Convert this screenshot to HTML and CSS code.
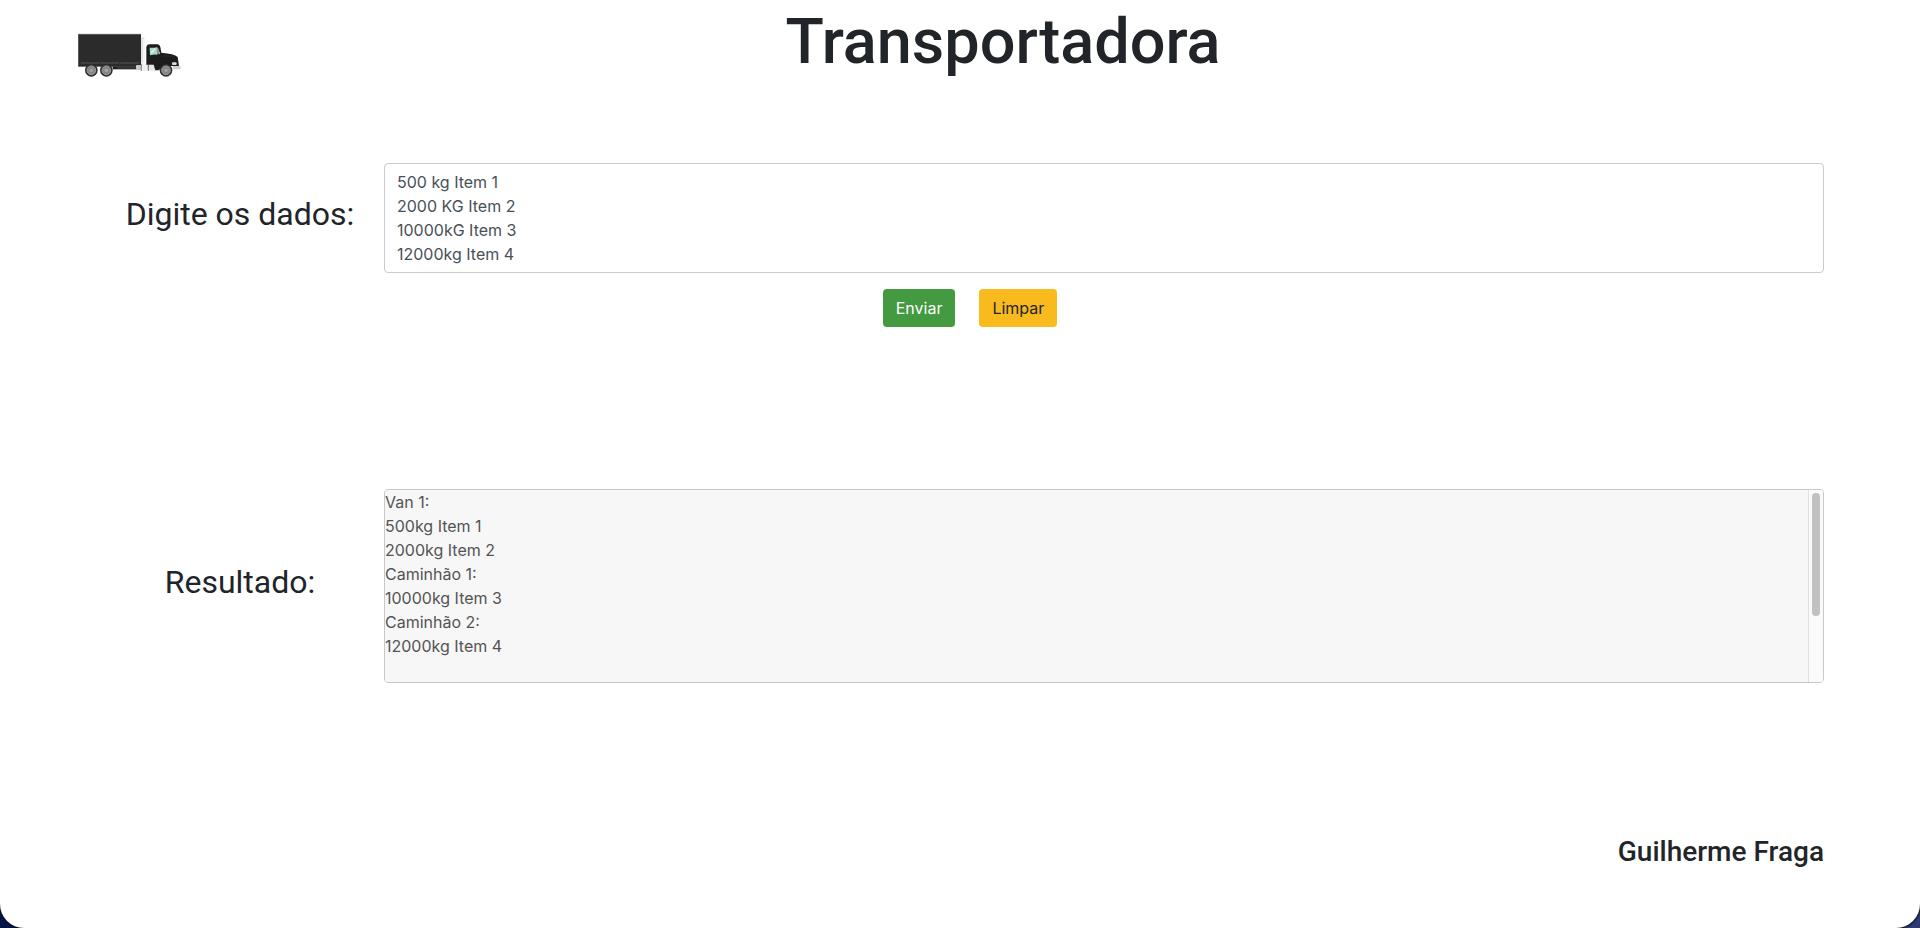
FILE: index.html
```html
<!DOCTYPE html>
<html lang="pt-BR">
<head>
  <meta charset="utf-8">
  <meta name="viewport" content="width=device-width, initial-scale=1">
  <title>Transportadora</title>
  <link rel="stylesheet" href="styles.css">
</head>
<body>
  <div class="window">
    <header class="header">
      <svg class="logo" viewBox="54 38 312 132" role="img" aria-label="Caminhão">
        <rect x="243" y="51" width="10" height="76" rx="4" fill="#e4e1de"/>
        <rect x="248" y="56" width="5" height="70" fill="#f4f1ef"/>
        <rect x="55" y="42" width="188" height="97" fill="#2b2b2b"/>
        <path d="M55 42h188M55 42v97" fill="none" stroke="#454545" stroke-width="2"/>
        <path d="M62 128h57M122 128h56M181 128h57" stroke="#575757" stroke-width="3"/>
        <rect x="158" y="138" width="76" height="9" fill="#202020"/>
        <path d="M172 143h56" stroke="#585858" stroke-width="2"/>
        <rect x="228" y="134" width="70" height="15" rx="3" fill="#c9c9c9"/>
        <rect x="243" y="130" width="20" height="21" rx="3" fill="#f0f0f0"/>
        <rect x="267" y="133" width="22" height="18" rx="3" fill="#e5e5e5"/>
        <path d="M244 130v22M265 130v22" stroke="#484848" stroke-width="2"/>
        <path d="M338 137h23q3 5 0 10h-23z" fill="#cfcfcf"/>
        <path d="M259 79q2-7 10-7h24q6 0 8 8l3 17q38 3 49 13l4 27h-40l-22 13h-9l-5-17h-22z" fill="#1c1c1c"/>
        <path d="M269 82h20v20l-19 3z" fill="#a5d9c8"/>
        <path d="M273 98l14-14" stroke="#e1f5ed" stroke-width="4"/>
        <path d="M294 82l7 18-6 2z" fill="#95c9b9"/>
        <rect x="286" y="81" width="7" height="22" rx="3" fill="#bfc7c5"/>
        <path d="M306 107h39" stroke="#343434" stroke-width="2"/>
        <rect x="336" y="126" width="14" height="8" rx="3" fill="#d9dcdd"/>
        <g fill="#303030"><circle cx="94" cy="150" r="19"/><circle cx="139" cy="150" r="19"/><circle cx="318" cy="150" r="19"/></g>
        <g fill="#858585" stroke="#9b9b9b" stroke-width="3"><circle cx="94" cy="150" r="13"/><circle cx="139" cy="150" r="13"/><circle cx="318" cy="150" r="13"/></g>
        <g fill="#a5a5a5"><circle cx="94" cy="150" r="5"/><circle cx="139" cy="150" r="5"/><circle cx="318" cy="150" r="5"/></g>
      </svg>
      <h1 class="title">Transportadora</h1>
    </header>
    <main class="content">
      <form class="form">
        <div class="row">
          <label class="label" for="dados">Digite os dados:</label>
          <textarea class="field" id="dados" rows="4">500 kg Item 1
2000 KG Item 2
10000kG Item 3
12000kg Item 4</textarea>
        </div>
        <div class="actions">
          <button class="button button-send" type="button">Enviar</button>
          <button class="button button-clear" type="reset">Limpar</button>
        </div>
      </form>
      <div class="row">
        <label class="label" for="resultado">Resultado:</label>
        <div class="result-box">
          <textarea class="field result" id="resultado" rows="8" disabled>Van 1:
500kg Item 1
2000kg Item 2
Caminhão 1:
10000kg Item 3
Caminhão 2:
12000kg Item 4




&nbsp;</textarea>
          <div class="scrollbar" aria-hidden="true"><div class="thumb"></div></div>
        </div>
      </div>
    </main>
    <footer class="footer">Guilherme Fraga</footer>
  </div>
</body>
</html>
```
FILE: styles.css
```css
*, *::before, *::after { box-sizing: border-box; }

html { background: linear-gradient(90deg, #031447, #2d3b70); }

body {
  margin: 0;
  font-family: Inter, "Liberation Sans", sans-serif;
  font-size: 16px;
  line-height: 24px;
  color: #212529;
}

.window {
  display: flex;
  flex-direction: column;
  min-height: 100vh;
  padding: 0 5% 56px;
  background: #fff;
  border-radius: 0 0 24px 24px;
  box-shadow: 0 0 2px 1px #0a0d20;
}

.header {
  display: flex;
  align-items: flex-start;
  margin-left: -18px;
}

.logo {
  flex: none;
  width: 104px;
  height: 44px;
  margin-top: 33px;
}

.title,
.label,
.footer { font-family: Roboto, Inter, sans-serif; }

.title {
  flex: 1;
  margin: 0;
  font-size: 63px;
  font-weight: 500;
  line-height: 84px;
  text-align: center;
}

.content {
  display: flex;
  flex-direction: column;
  gap: 162px;
  margin-top: 79px;
}

.row {
  display: grid;
  grid-template-columns: 1fr 5fr;
  align-items: center;
}

.label {
  margin-bottom: 8px;
  font-size: 32px;
  line-height: 40px;
  text-align: center;
}

.field {
  display: block;
  width: 100%;
  margin: 0;
  padding: 6px 12px;
  font: inherit;
  color: #495057;
  background: #fff;
  border: 1px solid #c5ccd6;
  border-radius: 4px;
  resize: none;
  overflow: hidden;
}

.result-box { position: relative; }

.result {
  padding: 0;
  color: #545454;
  background: #f7f7f7;
  border-color: #c8c8c8;
  overflow-y: scroll;
  scrollbar-width: none;
}

.scrollbar {
  position: absolute;
  top: 1px;
  right: 1px;
  bottom: 1px;
  width: 15px;
  padding: 3px;
  background: #fafafa;
  border-left: 1px solid #e0e0e0;
  border-radius: 0 3px 3px 0;
}

.thumb {
  height: 66%;
  background: #c1c1c1;
  border-radius: 4px;
}

.actions {
  display: flex;
  justify-content: center;
  gap: 24px;
  margin-top: 16px;
  padding-left: 20px;
}

.button {
  padding: 6px 12px;
  font: inherit;
  border: 1px solid transparent;
  border-radius: 4px;
}

.button-send { color: #fff; background: #439a40; }
.button-clear { color: #212529; background: #f9ba1e; }

.footer {
  margin-top: auto;
  font-size: 28px;
  font-weight: 500;
  line-height: 40px;
  text-align: right;
}
```
